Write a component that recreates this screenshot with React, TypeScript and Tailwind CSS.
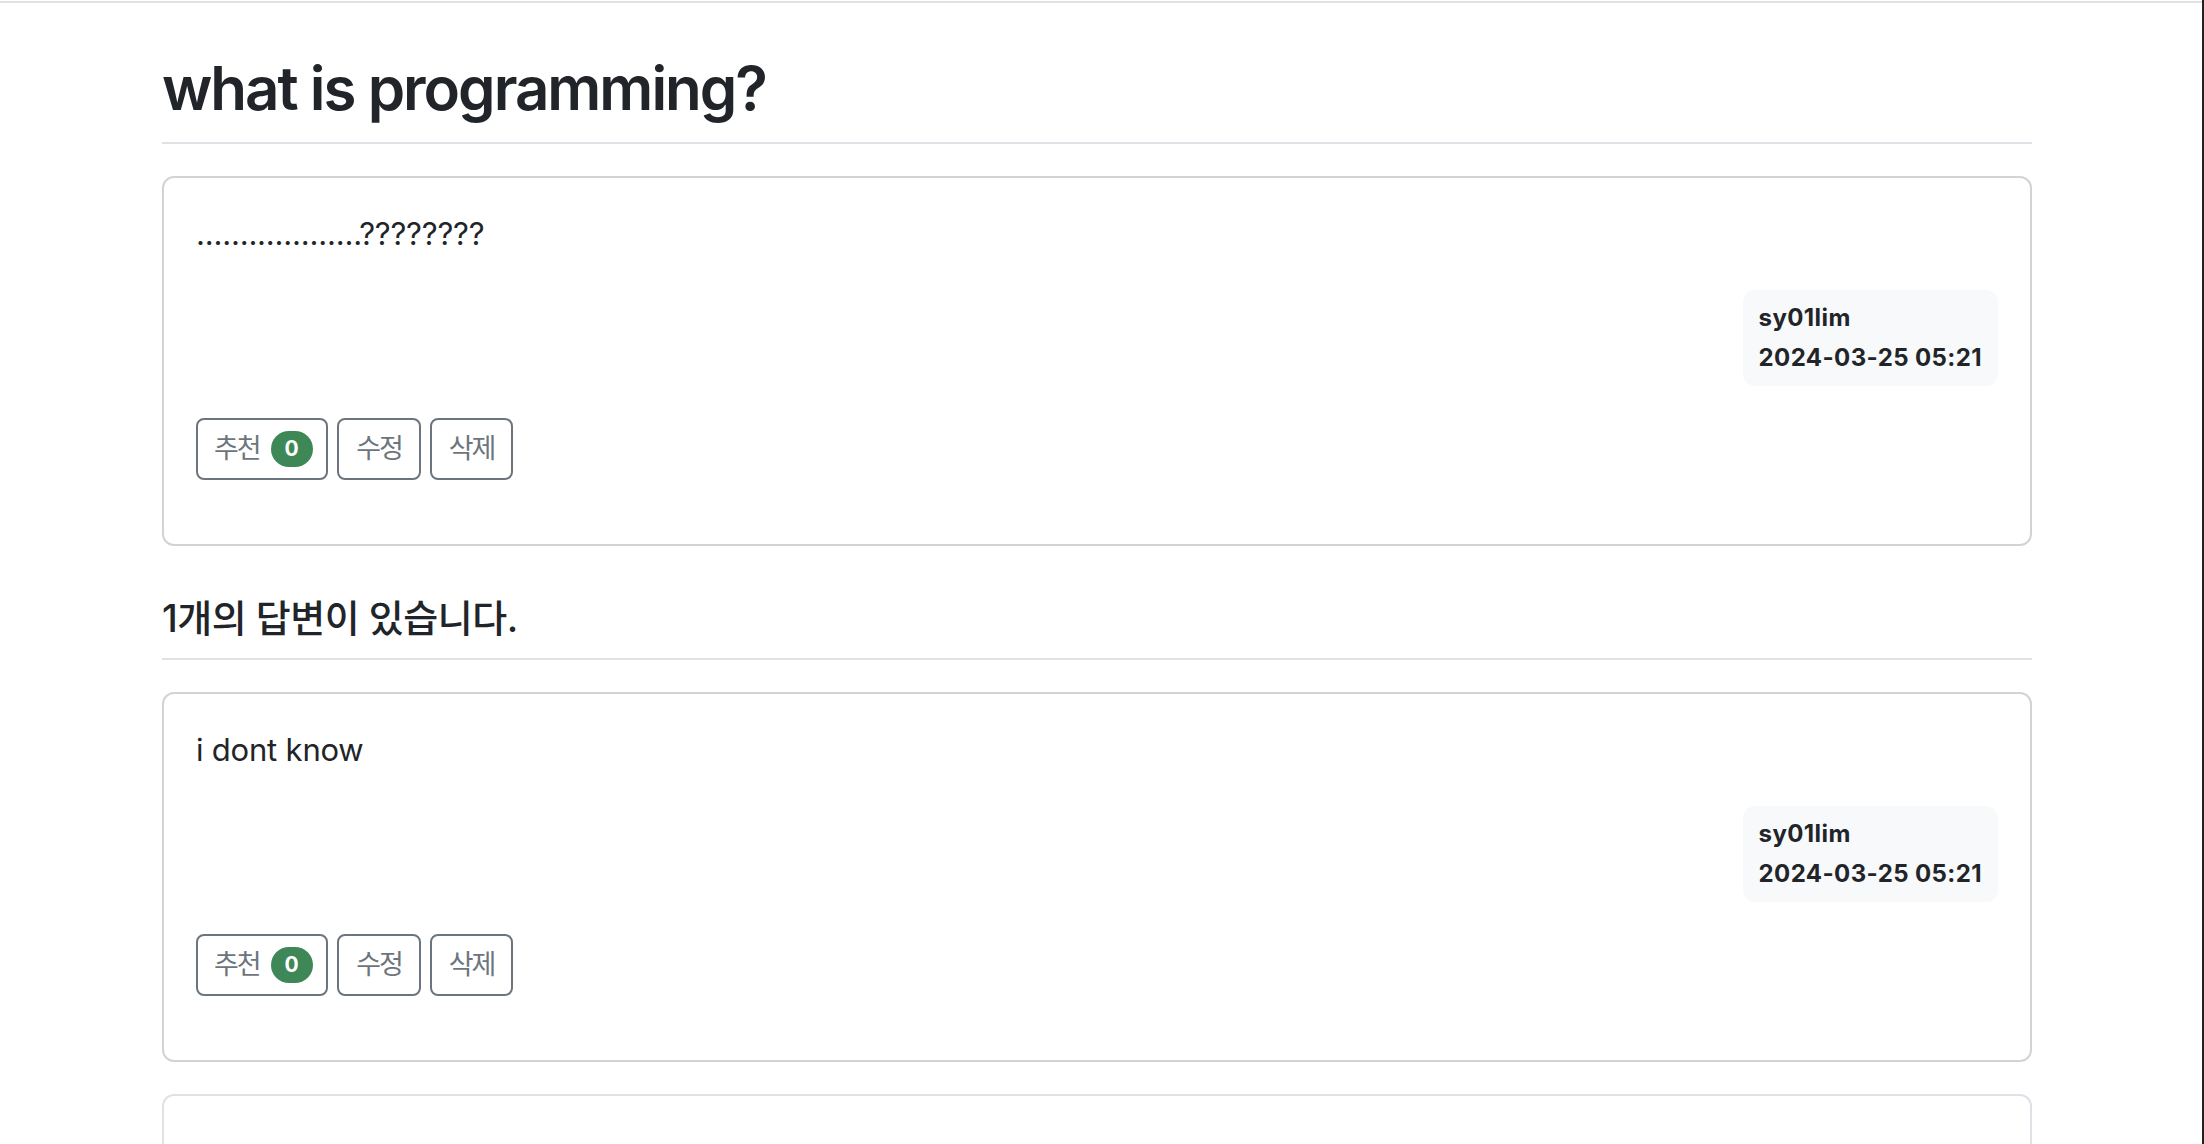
import React from 'react';

interface PostCardProps {
  content: string;
  author: string;
  createdAt: string;
  votes: number;
}

function PostCard({ content, author, createdAt, votes }: PostCardProps) {
  return (
    <div className="mt-[32px] rounded-[12px] border-2 border-[#d3d3d3] p-[32px]">
      <p className="mb-[32px] text-[31px] leading-[48px] tracking-[-0.2px]">{content}</p>

      {/* author + date */}
      <div className="flex justify-end">
        <div className="rounded-[12px] bg-[#f8f9fa] p-[16px] text-[24px] font-bold leading-[24px] tracking-[0.4px] text-[#212529]">
          <div className="mb-[16px]">{author}</div>
          <div>{createdAt}</div>
        </div>
      </div>

      {/* actions */}
      <div className="my-[32px] flex gap-[9px] text-[#6c757d]">
        <button className="flex h-[62px] w-[132px] shrink-0 items-center whitespace-nowrap rounded-[8px] border-2 border-[#6c757d] px-[16px] text-[27px]">
          <span className="shrink-0 tracking-[-2px]">추천</span>
          <span className="ml-[11px] flex h-[36px] w-[42px] shrink-0 items-center justify-center rounded-full bg-[#3e8757] text-[21px] font-bold text-white">
            {votes}
          </span>
        </button>
        <button className="flex h-[62px] w-[84px] shrink-0 items-center justify-center whitespace-nowrap rounded-[8px] border-2 border-[#6c757d] text-[27px] tracking-[-2px]">
          수정
        </button>
        <button className="flex h-[62px] w-[83px] shrink-0 items-center justify-center whitespace-nowrap rounded-[8px] border-2 border-[#6c757d] text-[27px] tracking-[-2px]">
          삭제
        </button>
      </div>
    </div>
  );
}

export default function App() {
  return (
    <div className="h-[1144px] overflow-hidden border-r-2 border-[#222] bg-white font-['Inter','Noto_Sans_CJK_KR',sans-serif] text-[#212529]">
      {/* navbar bottom edge */}
      <div className="h-[3px] border-b-2 border-[#dee2e6]" />

      <div className="ml-[162px] mt-[32px] w-[1870px]">
        <h2 className="border-b-2 border-[#dee2e6] py-[16px] text-[60px] font-semibold leading-[75px] tracking-[-2px]">
          what is programming?
        </h2>

        <PostCard
          content="...................????????"
          author="sy01lim"
          createdAt="2024-03-25 05:21"
          votes={0}
        />

        <h5 className="mt-[32px] border-b-2 border-[#dee2e6] py-[16px] text-[38px] font-medium leading-[48px] tracking-[-0.5px]">
          1개의 답변이 있습니다.
        </h5>

        <PostCard content="i dont know" author="sy01lim" createdAt="2024-03-25 05:21" votes={0} />

        {/* answer form */}
        <div className="mt-[32px] h-[300px] rounded-[12px] border-2 border-[#dee2e6]" />
      </div>
    </div>
  );
}
